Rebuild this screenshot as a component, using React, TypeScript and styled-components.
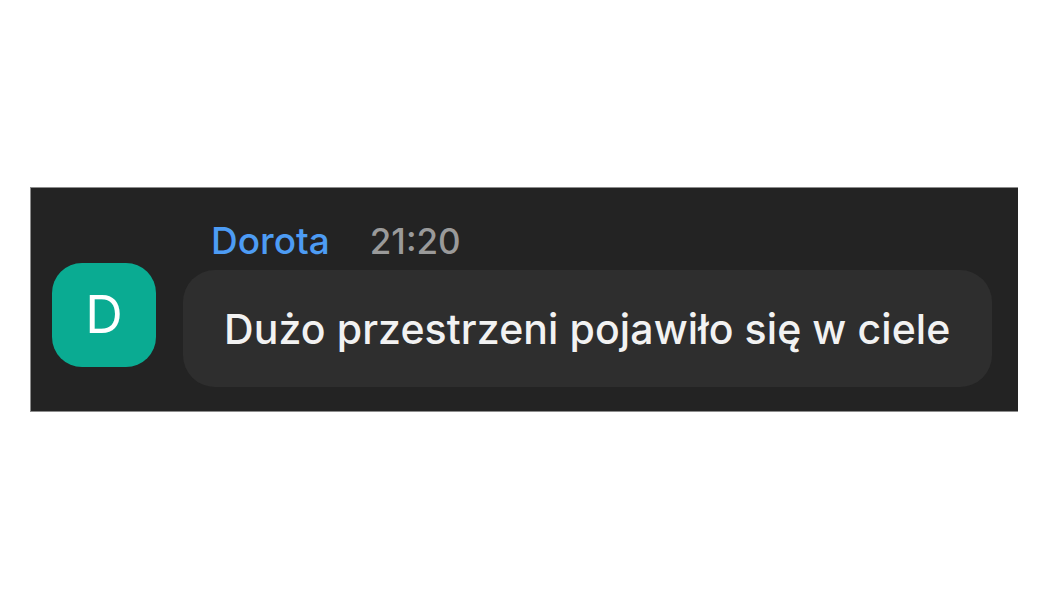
import React from 'react'
import styled, { createGlobalStyle } from 'styled-components'

const GlobalStyle = createGlobalStyle`
  body {
    margin: 0;
    background: #ffffff;
    font-family: Inter, "Noto Sans", sans-serif;
    -webkit-font-smoothing: antialiased;
  }
`

const Page = styled.div`
  padding: 187px 32px 0 30px;
`

const Panel = styled.div`
  display: flex;
  align-items: flex-start;
  gap: 27px;
  background: #232323;
  border: 1px solid #8c8c8c;
  border-right: none;
  padding: 37px 26px 24px 21px;
`

const Avatar = styled.div`
  flex: none;
  width: 104px;
  height: 104px;
  margin-top: 38px;
  border-radius: 30px;
  background: #0aab92;
  color: #ffffff;
  display: flex;
  align-items: center;
  justify-content: center;
  font-size: 52px;
  line-height: 1;
`

const Body = styled.div`
  flex: 1;
  display: flex;
  flex-direction: column;
  gap: 13px;
`

const Header = styled.div`
  display: flex;
  align-items: baseline;
  gap: 40px;
  padding-left: 28px;
  font-size: 37px;
  font-weight: 500;
  line-height: 32px;
`

const Name = styled.span`
  color: #4d9cf4;
`

const Time = styled.span`
  color: #9a9a9a;
  font-size: 35px;
`

const Bubble = styled.div`
  display: flex;
  align-items: center;
  height: 117px;
  padding: 0 41px;
  border-radius: 32px;
  background: #2e2e2e;
  color: #f2f2f2;
  font-size: 41px;
  font-weight: 500;
  letter-spacing: 0.1px;
`

export default function App() {
  return (
    <>
      <GlobalStyle />
      <Page>
        <Panel>
          <Avatar>D</Avatar>
          <Body>
            <Header>
              <Name>Dorota</Name>
              <Time>21:20</Time>
            </Header>
            <Bubble>Dużo przestrzeni pojawiło się w ciele</Bubble>
          </Body>
        </Panel>
      </Page>
    </>
  )
}
